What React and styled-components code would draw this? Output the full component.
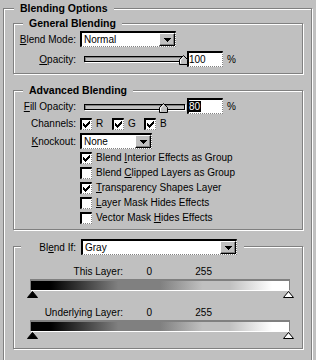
import React from 'react'
import styled, {createGlobalStyle} from 'styled-components'

const GlobalStyle = createGlobalStyle`
  html, body {
    margin: 0;
    padding: 0;
    background: #c0c0c0;
  }
  body {
    font-family: "Liberation Sans", Arial, sans-serif;
    font-size: 10px;
    color: #000;
    width: 316px;
    height: 360px;
    overflow: hidden;
  }
`;

const Group = styled('section')`
  box-sizing: border-box;
  border: 1px solid #808080;
  box-shadow: 1px 1px 0 #fff, inset 1px 1px 0 #fff;
  margin-top: ${props => props.$mt || 0}px;
  padding: ${props => props.$pad || '0'};
`;

const Outer = styled(Group)`
  width: 309px;
  margin-left: 3px;
`;

const Legend = styled('div')`
  display: flex;
  align-items: center;
  width: fit-content;
  height: ${props => props.$h || 11}px;
  margin: ${props => props.$mt || -6}px 0 0 ${props => props.$ml}px;
  padding: ${props => props.$pad || '0 6px'};
  background: #c0c0c0;
  font-size: 10.5px;
  font-weight: bold;
  line-height: 11px;
  white-space: nowrap;
`;

const Body = styled('div')`
  padding: ${props => props.$pad};
`;

const Row = styled('div')`
  display: flex;
  align-items: center;
  height: ${props => props.$h || 16}px;
  margin-top: ${props => props.$mt || 0}px;
  padding-left: ${props => props.$indent || 0}px;
`;

const Label = styled('label')`
  flex: none;
  width: ${props => props.$w || 62}px;
  margin-right: ${props => props.$gap ?? 4}px;
  text-align: right;
  white-space: nowrap;
  font-weight: normal;
  font-size: 10px;
`;

const Key = styled('u')`
  text-decoration: underline;
  text-underline-offset: 1px;
`;

const Select = styled('div')`
  flex: none;
  display: flex;
  box-sizing: border-box;
  width: ${props => props.$w}px;
  height: 16px;
  background: #fff;
  border-top: 2px solid #000;
  border-left: 2px solid #000;
  border-right: 1px dotted #808080;
  border-bottom: 1px dotted #808080;
  font-weight: normal;
  font-size: 10px;
`;

const SelectValue = styled('span')`
  flex: 1;
  padding-left: 2px;
  line-height: 13px;
`;

const ArrowButton = styled('span')`
  flex: none;
  display: flex;
  align-items: center;
  justify-content: center;
  box-sizing: border-box;
  width: 16px;
  height: 13px;
  background: #c0c0c0;
  border: 1px solid;
  border-color: #fff #000 #000 #fff;
  box-shadow: inset -1px -1px 0 #808080;
`;

const Field = styled('div')`
  flex: none;
  box-sizing: border-box;
  width: 36px;
  height: 16px;
  background: #fff;
  border-top: 2px solid #000;
  border-left: 2px solid #000;
  border-right: 1px dotted #808080;
  border-bottom: 1px dotted #808080;
  line-height: 13px;
`;

const Selected = styled('span')`
  display: inline-block;
  background: #000;
  color: #fff;
  line-height: 11px;
  padding: 0 1px 0 0;
`;

const Unit = styled('span')`
  margin-left: 4px;
`;

const Slider = styled('div')`
  position: relative;
  flex: none;
  width: 107px;
  height: 16px;
`;

const Track = styled('div')`
  box-sizing: border-box;
  width: 101px;
  height: 6px;
  margin: ${props => props.$top}px 0 0 4px;
  border: 1px solid #000;
  background: #c0c0c0;
  box-shadow: 1px 1px 0 #fff, inset 1px 1px 0 #808080;
`;

const Thumb = styled('svg')`
  position: absolute;
  display: block;
  top: ${props => props.$top - 1}px;
`;

const Box = styled('span')`
  flex: none;
  display: flex;
  align-items: center;
  justify-content: center;
  box-sizing: border-box;
  width: 12px;
  height: 12px;
  background: #fff;
  border-top: 2px solid #000;
  border-left: 2px solid #000;
  border-right: 1px dotted #808080;
  border-bottom: 1px dotted #808080;
`;

const CheckItem = styled('span')`
  flex: none;
  display: flex;
  align-items: center;
  gap: 4px;
  width: ${props => props.$w || 'auto'};
  white-space: nowrap;
`;

const ValueRow = styled('div')`
  display: flex;
  align-items: center;
  height: 12px;
  margin-top: ${props => props.$mt}px;
`;

const ValueCell = styled('span')`
  flex: none;
  width: ${props => props.$w}px;
  text-align: right;
  white-space: nowrap;
`;

const Ramp = styled('div')`
  box-sizing: border-box;
  width: 260px;
  height: 12px;
  margin: 2px 0 0 16px;
  border-top: 2px solid #808080;
  border-left: 1px solid #808080;
  border-right: 1px solid #808080;
  border-bottom: 1px solid #fff;
  background: linear-gradient(to right,
    #000 0%, #000 7.7%, #808080 33.8%, #808080 50%,
    #c0c0c0 66.5%, #c0c0c0 77%, #fff 93.5%, #fff 100%);
`;

const Stops = styled('div')`
  display: flex;
  justify-content: space-between;
  width: 267px;
  height: 7px;
  margin-left: 13px;
`;

const Arrow = () => (
    <svg width="7" height="4" viewBox="0 0 7 4" shapeRendering="crispEdges">
        <path d="M0 0h7v1h-1v1h-1v1h-1v1h-1v-1h-1v-1h-1v-1h-1z" fill="#000"/>
    </svg>
);

const Check = () => (
    <svg width="7" height="7" viewBox="0 0 7 7" shapeRendering="crispEdges">
        <path d="M6 0h1v3h-1v1h-1v1h-1v1h-1v1h-1v-1h-1v-1h-1v-3h1v1h1v1h1v-1h1v-1h1v-1h1z" fill="#000"/>
    </svg>
);

const CheckBox = ({checked}) => (
    <Box>{checked ? <Check/> : null}</Box>
);

const Dropdown = ({w, value}) => (
    <Select $w={w}>
        <SelectValue>{value}</SelectValue>
        <ArrowButton><Arrow/></ArrowButton>
    </Select>
);

const SliderControl = ({value, top}) => (
    <Slider>
        <Track $top={top}/>
        <Thumb $top={top} width="9" height="10" viewBox="0 0 9 10" style={{left: value - 1}}>
            <polygon points="4.5,0.5 8.5,4.5 8.5,9.5 0.5,9.5 0.5,4.5" fill="#c0c0c0" stroke="#000"/>
            <path d="M1.5 8.5V5L4.5 2" fill="none" stroke="#fff"/>
        </Thumb>
    </Slider>
);

const StopMarker = ({dark}) => (
    <svg width="11" height="7" viewBox="0 0 11 7">
        <polygon points="5.5,0.5 10.5,6.5 0.5,6.5" fill={dark ? '#000' : '#fff'} stroke="#000"/>
    </svg>
);

const checkList = [
    {on: true, pre: 'Blend ', key: 'I', post: 'nterior Effects as Group'},
    {on: false, pre: 'Blend ', key: 'C', post: 'lipped Layers as Group'},
    {on: true, pre: '', key: 'T', post: 'ransparency Shapes Layer'},
    {on: false, pre: '', key: 'L', post: 'ayer Mask Hides Effects'},
    {on: false, pre: 'Vector Mask ', key: 'H', post: 'ides Effects'},
];

const layers = [
    {name: 'This Layer:', mt: 10},
    {name: 'Underlying Layer:', mt: 8},
];

export default function App() {
    return (
        <>
            <GlobalStyle/>
            <Outer $mt={8} $pad="0 8px 20px 9px">
                <Legend $ml={1}>Blending Options</Legend>

                <Group $mt={9}>
                    <Legend $ml={9}>General Blending</Legend>
                    <Body $pad="2px 0 6px 0">
                        <Row>
                            <Label><Key>B</Key>lend Mode:</Label>
                            <Dropdown w={96} value="Normal"/>
                        </Row>
                        <Row $mt={4}>
                            <Label><Key>O</Key>pacity:</Label>
                            <SliderControl value={100} top={5}/>
                            <Field>100</Field>
                            <Unit>%</Unit>
                        </Row>
                    </Body>
                </Group>

                <Group $mt={16}>
                    <Legend $ml={9}>Advanced Blending</Legend>
                    <Body $pad="2px 0 4px 0">
                        <Row>
                            <Label><Key>F</Key>ill Opacity:</Label>
                            <SliderControl value={80} top={6}/>
                            <Field><Selected>80</Selected></Field>
                            <Unit>%</Unit>
                        </Row>
                        <Row $h={15} $mt={2}>
                            <Label>Channels:</Label>
                            {['R', 'G', 'B'].map(ch => (
                                <CheckItem key={ch} $w="32px"><CheckBox checked/>{ch}</CheckItem>
                            ))}
                        </Row>
                        <Row $mt={2}>
                            <Label><Key>K</Key>nockout:</Label>
                            <Dropdown w={72} value="None"/>
                        </Row>
                        <div style={{height: 1}}/>
                        {checkList.map(item => (
                            <Row key={item.post} $h={15} $indent={66}>
                                <CheckItem>
                                    <CheckBox checked={item.on}/>
                                    <span>{item.pre}<Key>{item.key}</Key>{item.post}</span>
                                </CheckItem>
                            </Row>
                        ))}
                    </Body>
                </Group>

                <Group $mt={16}>
                    <Legend $ml={7} $h={16} $mt={-8} $pad="0 7px 0 0">
                        <Label $w={55} $gap={5}>Bl<Key>e</Key>nd If:</Label>
                        <Dropdown w={156} value="Gray"/>
                    </Legend>
                    <Body $pad="0 0 9px 0">
                        {layers.map(layer => (
                            <React.Fragment key={layer.name}>
                                <ValueRow $mt={layer.mt}>
                                    <ValueCell $w={109}>{layer.name}</ValueCell>
                                    <ValueCell $w={29}>0</ValueCell>
                                    <ValueCell $w={60}>255</ValueCell>
                                </ValueRow>
                                <Ramp/>
                                <Stops>
                                    <StopMarker dark/>
                                    <StopMarker/>
                                </Stops>
                            </React.Fragment>
                        ))}
                    </Body>
                </Group>
            </Outer>
        </>
    )
}
